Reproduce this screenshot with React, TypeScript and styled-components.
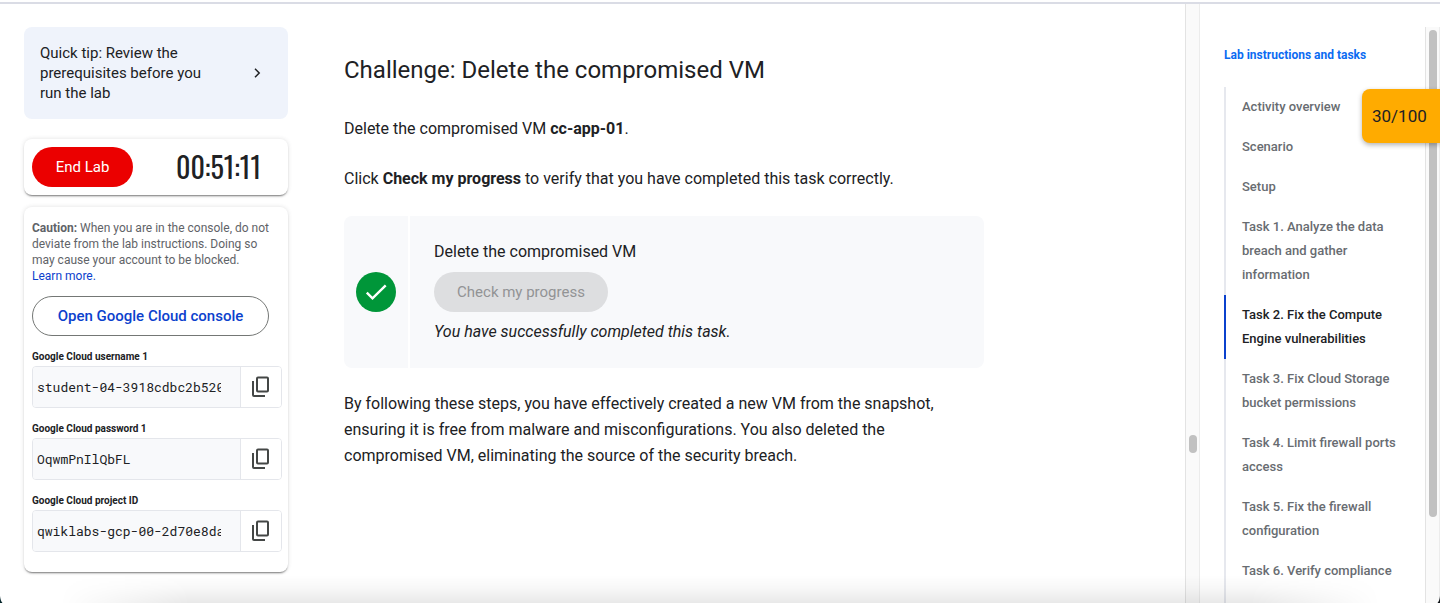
import React from "react";
import styled, { createGlobalStyle } from "styled-components";

const sans = `Roboto, "Liberation Sans", sans-serif`;

const GlobalStyle = createGlobalStyle`
  *, *::before, *::after { box-sizing: border-box; }
  body { margin: 0; background: #fff; color: #202124; font-family: ${sans}; }
  button, input { font-family: inherit; margin: 0; }
  h2, h3, p, ul { margin: 0; padding: 0; }
`;

const Page = styled.div`
  position: relative;
  display: flex;
  flex-direction: column;
  height: 100vh;
  overflow: hidden;
`;

const TopRule = styled.div`
  flex: none;
  margin-top: 2px;
  height: 2px;
  background: #dadce5;
`;

const Columns = styled.div`
  flex: 1;
  min-height: 0;
  display: flex;
`;

const Sidebar = styled.aside`
  flex: none;
  width: 312px;
  padding: 23px 24px 0;
`;

const TipCard = styled.button`
  display: flex;
  align-items: center;
  justify-content: space-between;
  width: 100%;
  padding: 16px 24px 16px 16px;
  border: 0;
  border-radius: 8px;
  background: #eff3fb;
  color: #202124;
  font-size: 15px;
  font-weight: 400;
  line-height: 20px;
  text-align: left;
`;

const TipText = styled.span`
  width: 168px;
`;

const Card = styled.section`
  border-radius: 8px;
  background: #fff;
  box-shadow: 0 2px 2px -1px rgba(0, 0, 0, 0.5), 0 0 4px rgba(60, 64, 67, 0.16);
`;

const TimerCard = styled(Card)`
  display: flex;
  align-items: center;
  justify-content: space-between;
  margin-top: 20px;
  padding: 8px 27px 8px 8px;
`;

const PillButton = styled.button<{ $kind: "danger" | "outline" | "muted" }>`
  display: inline-flex;
  align-items: center;
  justify-content: center;
  height: 40px;
  padding: 0 20px;
  border-radius: 20px;
  white-space: nowrap;
  font-size: 15px;
  font-weight: ${(p) => (p.$kind === "outline" ? 500 : 400)};
  border: ${(p) => (p.$kind === "outline" ? "1px solid #747775" : "0")};
  background: ${(p) =>
    p.$kind === "danger" ? "#eb0000" : p.$kind === "muted" ? "#dddee0" : "#fff"};
  color: ${(p) =>
    p.$kind === "danger" ? "#fff" : p.$kind === "muted" ? "#929395" : "#0b41cd"};
`;

const EndLab = styled(PillButton)`
  width: 101px;
`;

const OpenConsole = styled(PillButton)`
  width: 237px;
  margin-top: 12px;
`;

const CheckProgress = styled(PillButton)`
  width: 174px;
  margin: 8px 0;
`;

const Clock = styled.time`
  font-family: "Oswald", "Liberation Sans Narrow", Roboto, sans-serif;
  font-size: 28px;
  line-height: 40px;
`;

const AccessCard = styled(Card)`
  margin-top: 12px;
  padding: 13px 6px 20px 8px;
`;

const Caution = styled.p`
  font-size: 12px;
  line-height: 16px;
  color: #5f6368;
`;

const TextLink = styled.a`
  color: #0b41cd;
  text-decoration: none;
`;

const Field = styled.div`
  margin-top: 13px;
`;

const FieldLabel = styled.label`
  display: block;
  margin-bottom: 1px;
  font-size: 10px;
  font-weight: 700;
  line-height: 16px;
`;

const FieldRow = styled.div`
  display: flex;
  height: 42px;
  border: 1px solid #e4e6eb;
  border-radius: 4px;
  overflow: hidden;
`;

const FieldInput = styled.input`
  flex: 1;
  min-width: 0;
  padding: 0 19px 0 4px;
  border: 0;
  border-right: 1px solid #e4e6eb;
  background: #f8f9fb;
  color: #202124;
  font-family: "Roboto Mono", "Liberation Mono", monospace;
  font-size: 13px;
`;

const CopyButton = styled.button`
  flex: none;
  display: flex;
  align-items: center;
  justify-content: center;
  width: 40px;
  padding: 0;
  border: 0;
  background: #fff;
  color: #444746;
`;

const Main = styled.main`
  flex: 1;
  min-width: 0;
  padding: 50px 32px 0;
`;

const Title = styled.h2`
  font-size: 24px;
  font-weight: 400;
  line-height: 32px;
`;

const Paragraph = styled.p`
  max-width: 640px;
  margin-top: 24px;
  font-size: 16px;
  line-height: 26px;
`;

const Lead = styled(Paragraph)`
  margin-top: 30px;
`;

const Activity = styled.section`
  display: flex;
  gap: 2px;
  max-width: 640px;
  margin-top: 24px;
  border-radius: 8px;
  overflow: hidden;

  & + ${Paragraph} {
    margin-top: 23px;
  }
`;

const ActivityStatus = styled.div`
  flex: none;
  display: flex;
  align-items: center;
  justify-content: center;
  width: 64px;
  background: #f8f9fb;
`;

const Badge = styled.span`
  display: flex;
  align-items: center;
  justify-content: center;
  width: 40px;
  height: 40px;
  border-radius: 50%;
  background: #009639;
  color: #fff;
`;

const ActivityBody = styled.div`
  flex: 1;
  padding: 24px;
  background: #f8f9fb;
  font-size: 16px;
  line-height: 24px;
`;

const ActivityTitle = styled.h3`
  font-size: 16px;
  font-weight: 400;
  line-height: 24px;
`;

const Result = styled.p`
  font-style: italic;
`;

const ScrollTrack = styled.div<{ $top: number }>`
  flex: none;
  width: 15px;
  padding-top: ${(p) => p.$top}px;
  border-left: 1px solid #e3e3e3;
  border-right: 1px solid #ececec;
  background: #fafafa;
`;

const ScrollThumb = styled.div<{ $size: string }>`
  width: 8px;
  height: ${(p) => p.$size};
  margin: 0 auto;
  border-radius: 4px;
  background: #c1c1c1;
`;

const Outline = styled.nav`
  flex: none;
  display: flex;
  flex-direction: column;
  width: 225px;
  padding: 43px 16px 0 24px;
`;

const OutlineTitle = styled.a`
  font-size: 12px;
  font-weight: 700;
  line-height: 16px;
  color: #0b6bf2;
  text-decoration: none;
`;

const OutlineList = styled.ul`
  flex: 1;
  margin-top: 24px;
  list-style: none;
  border-left: 2px solid #e6e8ee;
`;

const OutlineItem = styled.li<{ $active?: boolean }>`
  margin-left: -2px;
  padding: 8px 0 8px 16px;
  border-left: 2px solid ${(p) => (p.$active ? "#0b41cd" : "transparent")};
`;

const OutlineLink = styled.a<{ $active?: boolean }>`
  display: block;
  font-size: 13px;
  font-weight: 500;
  line-height: 24px;
  color: ${(p) => (p.$active ? "#202124" : "#686c71")};
  text-decoration: none;
`;

const OutlineScroll = styled.div`
  flex: none;
  display: flex;
  padding-top: 23px;
`;

const Score = styled.div`
  position: absolute;
  top: 89px;
  right: 0;
  width: 78px;
  padding-left: 10px;
  border-radius: 8px 0 0 8px;
  background: #ffab00;
  box-shadow: 0 2px 5px rgba(0, 0, 0, 0.3);
  font-size: 17px;
  line-height: 54px;
`;

const BottomFade = styled.div`
  position: absolute;
  left: 0;
  right: 0;
  bottom: 0;
  height: 28px;
  pointer-events: none;
  background: linear-gradient(
    to bottom,
    rgba(0, 0, 0, 0),
    rgba(0, 0, 0, 0.03) 50%,
    rgba(0, 0, 0, 0.09)
  );
  mask-image: linear-gradient(
    to right,
    transparent 60px,
    #000 190px,
    #000 calc(100% - 190px),
    transparent calc(100% - 60px)
  );
`;

const Corner = styled.svg<{ $side: "left" | "right" }>`
  position: absolute;
  bottom: 0;
  ${(p) => p.$side}: 0;
`;

const ChevronIcon = () => (
  <svg width="14" height="14" viewBox="0 0 14 14" fill="none" stroke="currentColor" strokeWidth="1.5" aria-hidden="true">
    <path d="M5 2.8 9.2 7 5 11.2" />
  </svg>
);

const CopyIcon = () => (
  <svg width="24" height="24" viewBox="0 0 24 24" fill="none" stroke="currentColor" strokeWidth="2" aria-hidden="true">
    <rect x="8" y="2.5" width="11" height="14" rx="1" />
    <path d="M4 6v14a1 1 0 0 0 1 1h11" />
  </svg>
);

const CheckIcon = () => (
  <svg width="24" height="24" viewBox="0 0 24 24" fill="none" stroke="currentColor" strokeWidth="2.4" aria-hidden="true">
    <path d="M2.8 12.6 8.5 18.3 21.7 5.3" />
  </svg>
);

const credentials = [
  { id: "username", label: "Google Cloud username 1", value: "student-04-3918cdbc2b520" },
  { id: "password", label: "Google Cloud password 1", value: "OqwmPnIlQbFL" },
  { id: "project", label: "Google Cloud project ID", value: "qwiklabs-gcp-00-2d70e8da" },
];

const sections = [
  "Activity overview",
  "Scenario",
  "Setup",
  "Task 1. Analyze the data breach and gather information",
  "Task 2. Fix the Compute Engine vulnerabilities",
  "Task 3. Fix Cloud Storage bucket permissions",
  "Task 4. Limit firewall ports access",
  "Task 5. Fix the firewall configuration",
  "Task 6. Verify compliance",
];
const activeSection = 4;

export default function App() {
  return (
    <Page>
      <GlobalStyle />
      <TopRule />
      <Columns>
        <Sidebar>
          <TipCard type="button">
            <TipText>Quick tip: Review the prerequisites before you run the lab</TipText>
            <ChevronIcon />
          </TipCard>
          <TimerCard>
            <EndLab type="button" $kind="danger">End Lab</EndLab>
            <Clock>00:51:11</Clock>
          </TimerCard>
          <AccessCard>
            <Caution>
              <b>Caution:</b> When you are in the console, do not deviate from the lab
              instructions. Doing so may cause your account to be blocked.
              <br />
              <TextLink href="#learn">Learn more.</TextLink>
            </Caution>
            <OpenConsole type="button" $kind="outline">Open Google Cloud console</OpenConsole>
            {credentials.map((c) => (
              <Field key={c.id}>
                <FieldLabel htmlFor={c.id}>{c.label}</FieldLabel>
                <FieldRow>
                  <FieldInput id={c.id} type="text" readOnly value={c.value} />
                  <CopyButton type="button" aria-label={`Copy ${c.label}`}>
                    <CopyIcon />
                  </CopyButton>
                </FieldRow>
              </Field>
            ))}
          </AccessCard>
        </Sidebar>

        <Main>
          <Title>Challenge: Delete the compromised VM</Title>
          <Lead>
            Delete the compromised VM <b>cc-app-01</b>.
          </Lead>
          <Paragraph>
            Click <b>Check my progress</b> to verify that you have completed this task correctly.
          </Paragraph>
          <Activity>
            <ActivityStatus>
              <Badge>
                <CheckIcon />
              </Badge>
            </ActivityStatus>
            <ActivityBody>
              <ActivityTitle>Delete the compromised VM</ActivityTitle>
              <CheckProgress type="button" $kind="muted" disabled>
                Check my progress
              </CheckProgress>
              <Result>You have successfully completed this task.</Result>
            </ActivityBody>
          </Activity>
          <Paragraph>
            By following these steps, you have effectively created a new VM from the snapshot,
            ensuring it is free from malware and misconfigurations. You also deleted the
            compromised VM, eliminating the source of the security breach.
          </Paragraph>
        </Main>
        <ScrollTrack $top={431}>
          <ScrollThumb $size="18px" />
        </ScrollTrack>

        <Outline aria-label="Lab instructions">
          <OutlineTitle href="#top">Lab instructions and tasks</OutlineTitle>
          <OutlineList>
            {sections.map((name, i) => (
              <OutlineItem key={name} $active={i === activeSection}>
                <OutlineLink href={`#section-${i}`} $active={i === activeSection}>
                  {name}
                </OutlineLink>
              </OutlineItem>
            ))}
          </OutlineList>
        </Outline>
        <OutlineScroll>
          <ScrollTrack $top={3}>
            <ScrollThumb $size="85%" />
          </ScrollTrack>
        </OutlineScroll>
      </Columns>

      <Score>30/100</Score>
      <BottomFade />
      <Corner $side="left" width="3" height="7" viewBox="0 0 3 7" aria-hidden="true">
        <path d="M0 0Q0.5 5 2.5 7H0Z" fill="#06262b" />
      </Corner>
      <Corner $side="right" width="3" height="7" viewBox="0 0 3 7" aria-hidden="true">
        <path d="M3 0Q2.5 5 0.5 7H3Z" fill="#101418" />
      </Corner>
    </Page>
  );
}
